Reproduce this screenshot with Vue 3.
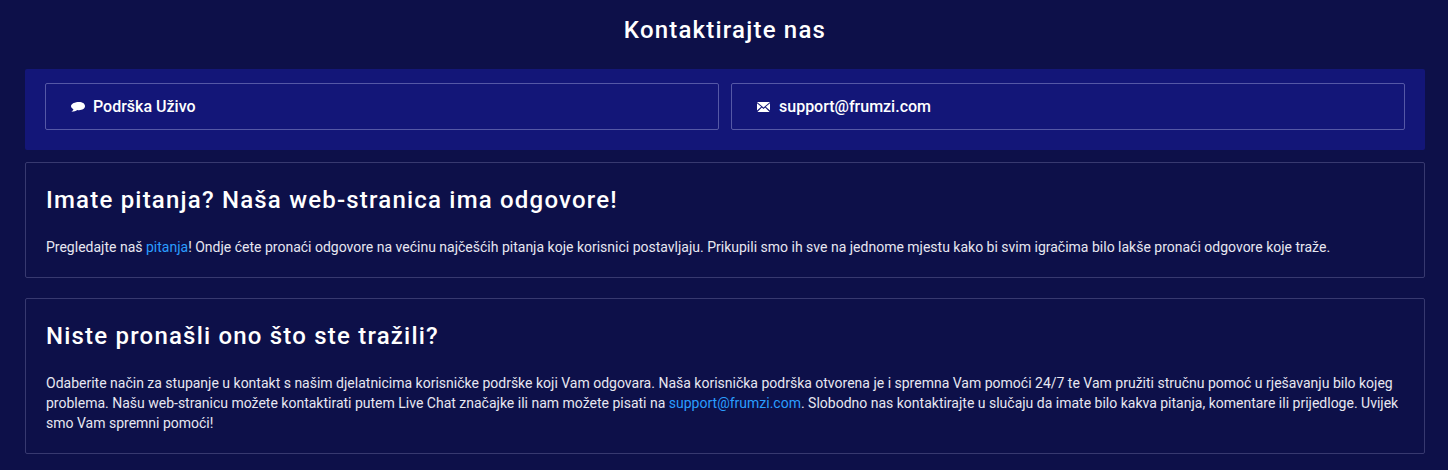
<template>
  <div class="page">
    <h1 class="page-title">Kontaktirajte nas</h1>

    <div class="contact-bar">
      <a class="contact-btn">
        <svg class="icon chat" viewBox="0 0 14 10" width="14" height="10">
          <path d="M8 0C11.5 0 14 1.6 14 4.1C14 6.6 11.5 8.2 8 8.2C7.4 8.2 6.8 8.2 6.2 8C5 9.1 3 9.7 0.3 9.7C1.5 9 2.2 8.1 2.4 7.2C0.9 6.5 0 5.4 0 4.1C0 1.6 4.3 0 8 0Z" fill="#fff" />
        </svg>
        <span>Podrška Uživo</span>
      </a>
      <a class="contact-btn">
        <svg class="icon" viewBox="0 0 13 10" width="13" height="10">
          <path d="M0 0H13L6.5 5.4Z" fill="#fff" />
          <path d="M0 1.3V8.6L4.2 4.8ZM13 1.3V8.6L8.8 4.8ZM0.4 10H12.6L8.1 5.6L6.5 7L4.9 5.6Z" fill="#fff" />
        </svg>
        <span class="mail">support@frumzi.com</span>
      </a>
    </div>

    <section v-for="card in cards" :key="card.title" class="card">
      <h2 class="card-title">{{ card.title }}</h2>
      <p class="card-text">
        <template v-for="part in card.parts" :key="part.text">
          <a v-if="part.link" class="link">{{ part.text }}</a>
          <template v-else>{{ part.text }}</template>
        </template>
      </p>
    </section>
  </div>
</template>

<script setup>
const cards = [
  {
    title: 'Imate pitanja? Naša web-stranica ima odgovore!',
    parts: [
      { text: 'Pregledajte naš ' },
      { text: 'pitanja', link: true },
      { text: '! Ondje ćete pronaći odgovore na većinu najčešćih pitanja koje korisnici postavljaju. Prikupili smo ih sve na jednome mjestu kako bi svim igračima bilo lakše pronaći odgovore koje traže.' }
    ]
  },
  {
    title: 'Niste pronašli ono što ste tražili?',
    parts: [
      { text: 'Odaberite način za stupanje u kontakt s našim djelatnicima korisničke podrške koji Vam odgovara. Naša korisnička podrška otvorena je i spremna Vam pomoći 24/7 te Vam pružiti stručnu pomoć u rješavanju bilo kojeg problema. Našu web-stranicu možete kontaktirati putem Live Chat značajke ili nam možete pisati na ' },
      { text: 'support@frumzi.com', link: true },
      { text: '. Slobodno nas kontaktirajte u slučaju da imate bilo kakva pitanja, komentare ili prijedloge. Uvijek smo Vam spremni pomoći!' }
    ]
  }
]
</script>

<style>
html,
body {
  background: #0d1049;
}
</style>

<style scoped>
.page {
  height: 470px;
  overflow: hidden;
  box-sizing: border-box;
  padding: 15px 23px 0 25px;
  background: #0d1049;
  font-family: Roboto, "Liberation Sans", sans-serif;
  color: #fff;
}

.page-title {
  margin: 0 0 24px;
  height: 30px;
  font-size: 24px;
  line-height: 30px;
  font-weight: 500;
  letter-spacing: 1.2px;
  text-align: center;
}

.contact-bar {
  display: grid;
  grid-template-columns: 1fr 1fr;
  gap: 12px;
  padding: 14px 20px 20px;
  margin-bottom: 12px;
  background: #131678;
  border-radius: 2px;
}

.contact-btn {
  display: flex;
  align-items: center;
  gap: 8px;
  height: 47px;
  box-sizing: border-box;
  padding-left: 25px;
  border: 1px solid #5558a6;
  border-radius: 2px;
  font-size: 16px;
  font-weight: 500;
}

.mail {
  margin-left: 1px;
}

.icon {
  flex-shrink: 0;
}

.chat {
  margin-left: -0.5px;
  margin-right: 0.5px;
}

.card {
  box-sizing: border-box;
  padding: 21px 20px 0;
  margin-bottom: 20px;
  border: 1px solid #37396f;
  border-radius: 2px;
}

.card-title {
  margin: 0 0 21px;
  font-size: 24px;
  line-height: 32px;
  font-weight: 500;
  letter-spacing: 1.2px;
}

.card-text {
  margin: 0 0 20px;
  font-size: 14px;
  line-height: 20px;
  color: #e7e7f1;
}

.link {
  color: #2a9dff;
}
</style>
